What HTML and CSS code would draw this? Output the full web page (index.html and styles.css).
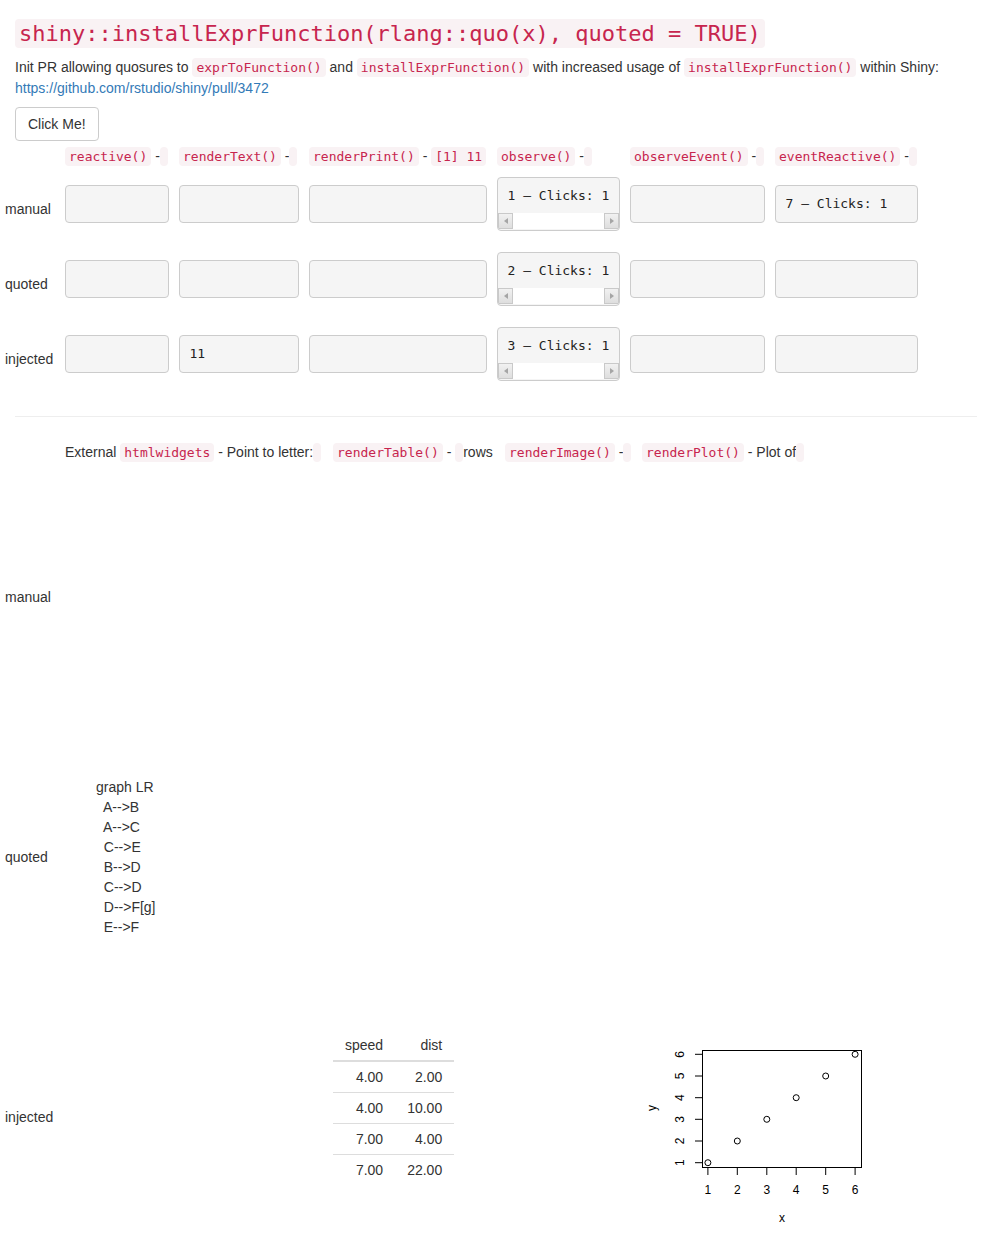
FILE: index.html
```html
<!DOCTYPE html>
<html lang="en">
<head>
    <meta charset="UTF-8">
    <title>installExprFunction quosures</title>
    <meta name="viewport" content="width=device-width, initial-scale=1.0">
    <link rel="stylesheet" href="styles.css">
</head>
<body>
<div class="page">

<h3 class="title"><code>shiny::installExprFunction(rlang::quo(x), quoted = TRUE)</code></h3>
<p>Init PR allowing quosures to <code>exprToFunction()</code> and <code>installExprFunction()</code> with increased usage of <code>installExprFunction()</code> within Shiny:<br><a href="#">https://github.com/rstudio/shiny/pull/3472</a></p>

<div class="actions">
    <button class="btn">Click Me!</button>
</div>

<div class="grid outputs">
    <div class="cell"></div>
    <div class="cell"><code>reactive()</code> - <code></code></div>
    <div class="cell"><code>renderText()</code> - <code></code></div>
    <div class="cell"><code>renderPrint()</code> - <code>[1] 11</code></div>
    <div class="cell"><code>observe()</code> - <code></code></div>
    <div class="cell"><code>observeEvent()</code> - <code></code></div>
    <div class="cell"><code>eventReactive()</code> - <code></code></div>

    <div class="cell label">manual</div>
    <div class="cell"><pre class="out"></pre></div>
    <div class="cell"><pre class="out"></pre></div>
    <div class="cell"><pre class="out"></pre></div>
    <div class="cell"><div class="out scroll"><div class="txt">1 – Clicks: 1</div><div class="sb"><span class="sb-btn left"></span><span class="sb-track"></span><span class="sb-btn right"></span></div></div></div>
    <div class="cell"><pre class="out"></pre></div>
    <div class="cell"><pre class="out">7 – Clicks: 1</pre></div>

    <div class="cell label">quoted</div>
    <div class="cell"><pre class="out"></pre></div>
    <div class="cell"><pre class="out"></pre></div>
    <div class="cell"><pre class="out"></pre></div>
    <div class="cell"><div class="out scroll"><div class="txt">2 – Clicks: 1</div><div class="sb"><span class="sb-btn left"></span><span class="sb-track"></span><span class="sb-btn right"></span></div></div></div>
    <div class="cell"><pre class="out"></pre></div>
    <div class="cell"><pre class="out"></pre></div>

    <div class="cell label">injected</div>
    <div class="cell"><pre class="out"></pre></div>
    <div class="cell"><pre class="out">11</pre></div>
    <div class="cell"><pre class="out"></pre></div>
    <div class="cell"><div class="out scroll"><div class="txt">3 – Clicks: 1</div><div class="sb"><span class="sb-btn left"></span><span class="sb-track"></span><span class="sb-btn right"></span></div></div></div>
    <div class="cell"><pre class="out"></pre></div>
    <div class="cell"><pre class="out"></pre></div>
</div>

<hr>

<div class="grid widgets">
    <div class="cell"></div>
    <div class="cell">External <code>htmlwidgets</code> - Point to letter: <code></code></div>
    <div class="cell"><code>renderTable()</code> - <code></code> rows</div>
    <div class="cell"><code>renderImage()</code> - <code></code></div>
    <div class="cell"><code>renderPlot()</code> - Plot of <code></code></div>

    <div class="cell label">manual</div>
    <div class="cell"></div>
    <div class="cell"></div>
    <div class="cell"></div>
    <div class="cell"></div>

    <div class="cell label">quoted</div>
    <div class="cell"><div class="diagram">graph LR
  A--&gt;B
  A--&gt;C
  C--&gt;E
  B--&gt;D
  C--&gt;D
  D--&gt;F[g]
  E--&gt;F</div></div>
    <div class="cell"></div>
    <div class="cell"></div>
    <div class="cell"></div>

    <div class="cell label">injected</div>
    <div class="cell"></div>
    <div class="cell">
        <table class="data">
            <thead>
                <tr><th>speed</th><th>dist</th></tr>
            </thead>
            <tbody>
                <tr><td>4.00</td><td>2.00</td></tr>
                <tr><td>4.00</td><td>10.00</td></tr>
                <tr><td>7.00</td><td>4.00</td></tr>
                <tr><td>7.00</td><td>22.00</td></tr>
            </tbody>
        </table>
    </div>
    <div class="cell"></div>
    <div class="cell">
        <svg class="plot" width="250" height="250" viewBox="0 0 250 250">
            <g stroke="#000" stroke-width="1" fill="none">
                <rect x="60.5" y="58.5" width="159" height="117"/>
                <line x1="53" y1="170.7" x2="60" y2="170.7"/>
                <line x1="53" y1="149" x2="60" y2="149"/>
                <line x1="53" y1="127.3" x2="60" y2="127.3"/>
                <line x1="53" y1="105.7" x2="60" y2="105.7"/>
                <line x1="53" y1="84" x2="60" y2="84"/>
                <line x1="53" y1="62.3" x2="60" y2="62.3"/>
                <line x1="65.9" y1="176" x2="65.9" y2="183"/>
                <line x1="95.3" y1="176" x2="95.3" y2="183"/>
                <line x1="124.8" y1="176" x2="124.8" y2="183"/>
                <line x1="154.2" y1="176" x2="154.2" y2="183"/>
                <line x1="183.7" y1="176" x2="183.7" y2="183"/>
                <line x1="213.1" y1="176" x2="213.1" y2="183"/>
                <circle cx="65.9" cy="170.7" r="3"/>
                <circle cx="95.3" cy="149" r="3"/>
                <circle cx="124.8" cy="127.3" r="3"/>
                <circle cx="154.2" cy="105.7" r="3"/>
                <circle cx="183.7" cy="84" r="3"/>
                <circle cx="213.1" cy="62.3" r="3"/>
            </g>
            <g class="plot-text" text-anchor="middle">
                <text transform="translate(42,170.7) rotate(-90)">1</text>
                <text transform="translate(42,149) rotate(-90)">2</text>
                <text transform="translate(42,127.3) rotate(-90)">3</text>
                <text transform="translate(42,105.7) rotate(-90)">4</text>
                <text transform="translate(42,84) rotate(-90)">5</text>
                <text transform="translate(42,62.3) rotate(-90)">6</text>
                <text transform="translate(14,116) rotate(-90)">y</text>
                <text x="65.9" y="202">1</text>
                <text x="95.3" y="202">2</text>
                <text x="124.8" y="202">3</text>
                <text x="154.2" y="202">4</text>
                <text x="183.7" y="202">5</text>
                <text x="213.1" y="202">6</text>
                <text x="140" y="230">x</text>
            </g>
        </svg>
    </div>
</div>

</div>
</body>
</html>
```

FILE: styles.css
```css
body {
    margin: 0;
    font-family: "Liberation Sans", Arial, sans-serif;
    font-size: 14px;
    line-height: 20px;
    color: #333;
    background: #fff;
}
.page {
    padding: 0 15px;
}
code {
    font-family: "DejaVu Sans Mono", monospace;
    font-size: 13px;
    padding: 2px 4px;
    color: #c7254e;
    background: #f9f2f4;
    border-radius: 4px;
}
.title {
    font-size: 24px;
    font-weight: 500;
    line-height: 26px;
    margin: 20px 0 10px;
}
.title code {
    font-size: 22px;
}
p {
    margin: 0 0 9px;
}
a {
    color: #337ab7;
    text-decoration: none;
}
.actions {
    display: flex;
}
.btn {
    font: inherit;
    line-height: 20px;
    color: #333;
    background: #fff;
    border: 1px solid #ccc;
    border-radius: 4px;
    padding: 6px 12px;
}
.grid {
    display: grid;
    align-items: center;
    margin: 0 -15px;
}
.outputs {
    grid-template-columns: 60px 114px 130px 188px 133px 145px 153px;
    grid-template-rows: 30px 75px 75px 75px;
}
.widgets {
    grid-template-columns: 60px 268px 172px 137px 1fr;
    grid-template-rows: 30px 260px 260px 260px;
}
.cell {
    padding: 5px;
    white-space: nowrap;
}
.out {
    box-sizing: border-box;
    height: 38px;
    margin: 0 0 10px;
    padding: 9.5px;
    font-family: "DejaVu Sans Mono", monospace;
    font-size: 13px;
    line-height: 17px;
    color: #222;
    background: #f5f5f5;
    border: 1px solid #ccc;
    border-radius: 4px;
    white-space: pre;
    overflow: hidden;
}
.out.scroll {
    height: 54px;
    padding: 0;
}
.scroll .txt {
    padding: 9.5px 9.5px 9px;
    white-space: pre;
}
.sb {
    display: flex;
    height: 16px;
    background: #fff;
}
.sb-btn {
    position: relative;
    width: 15px;
    background: linear-gradient(#f1f1f1, #dedede);
    border: 1px solid #c9c9c9;
    box-sizing: border-box;
}
.sb-track {
    flex: 1;
    background: #fff;
}
.sb-btn::after {
    content: "";
    position: absolute;
    top: 4px;
    left: 5px;
    border-top: 3px solid transparent;
    border-bottom: 3px solid transparent;
}
.sb-btn.left::after {
    border-right: 4px solid #a5a5a5;
}
.sb-btn.right::after {
    border-left: 4px solid #a5a5a5;
}
hr {
    margin: 20px 0;
    border: 0;
    border-top: 1px solid #eee;
}
.diagram {
    padding-left: 31px;
    white-space: pre;
    line-height: 20px;
}
.data {
    border-collapse: collapse;
    margin-bottom: 20px;
}
.data th,
.data td {
    padding: 5px 12px;
    text-align: right;
    font-weight: normal;
    line-height: 20px;
}
.data th {
    border-bottom: 2px solid #ddd;
}
.data td {
    border-top: 1px solid #ddd;
}
.plot {
    display: block;
}
.plot-text {
    font-family: "Liberation Sans", Arial, sans-serif;
    font-size: 12px;
    fill: #000;
}
```
